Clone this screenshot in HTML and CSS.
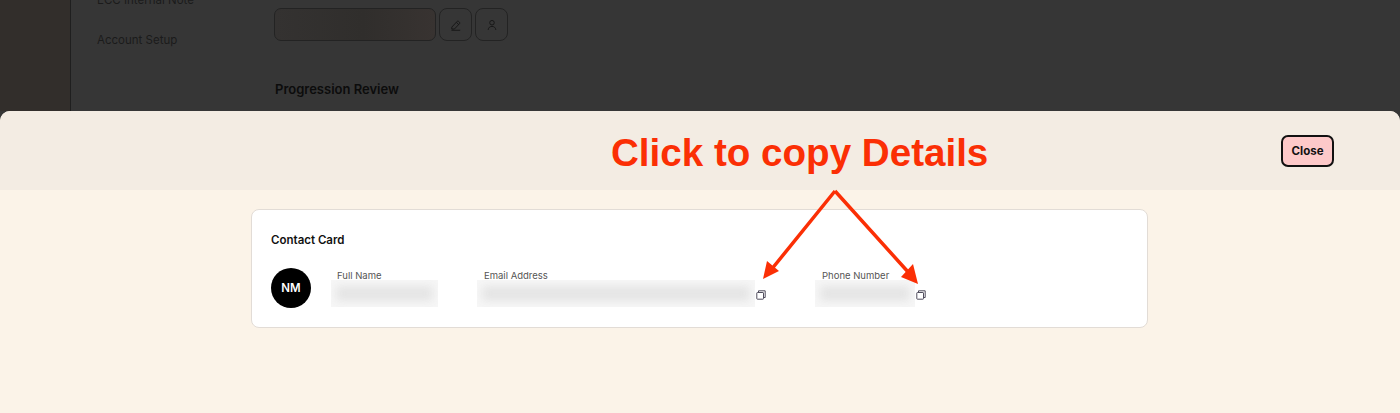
FILE: index.html
```html
<!DOCTYPE html>
<html lang="en">
<head>
<meta charset="utf-8">
<title>Contact Card</title>
<link rel="stylesheet" href="styles.css">
</head>
<body>
<div class="page">
  <aside class="rail"></aside>
  <main class="behind">
    <nav class="side-nav">
      <span class="nav-item nav-clipped">ECC Internal Note</span>
      <span class="nav-item">Account Setup</span>
    </nav>
    <div class="behind-main">
      <div class="toolbar">
        <div class="masked-input"></div>
        <button class="icon-btn" type="button" aria-label="Edit">
          <svg viewBox="0 0 16 16" class="btn-icon"><path d="M3.200 10.400 9.400 3.800a1 1 0 0 1 1.400 0l1.300 1.200a1 1 0 0 1 0 1.400L6.200 12.600H3.200zM8.400 4.900l2.700 2.600M2.800 14h10"/></svg>
        </button>
        <button class="icon-btn" type="button" aria-label="Person">
          <svg viewBox="0 0 16 16" class="btn-icon"><circle cx="8" cy="5.400" r="2.600"/><path d="M3.600 13.600c.3-2.600 2-4 4.400-4s4.100 1.400 4.400 4"/></svg>
        </button>
      </div>
      <h2 class="section-title">Progression Review</h2>
    </div>
  </main>
</div>

<section class="sheet">
  <header class="sheet-head">
    <button class="close-btn" type="button">Close</button>
  </header>
  <div class="sheet-body">
    <article class="card">
      <h3 class="card-title">Contact Card</h3>
      <div class="contact-row">
        <div class="avatar">NM</div>
        <div class="field field-name">
          <span class="field-label">Full Name</span>
          <div class="value-row"><div class="blurred blurred-name"></div></div>
        </div>
        <div class="field field-email">
          <span class="field-label field-label-wide">Email Address</span>
          <div class="value-row">
            <div class="blurred blurred-email"></div>
            <svg class="copy-icon" viewBox="0 0 10 10"><path d="M2.500 2.500V.8h6.700v6.700H7.500"/><rect x=".8" y="2.500" width="6.700" height="6.700" rx=".6"/></svg>
          </div>
        </div>
        <div class="field field-phone">
          <span class="field-label field-label-wide">Phone Number</span>
          <div class="value-row">
            <div class="blurred blurred-phone"></div>
            <svg class="copy-icon" viewBox="0 0 10 10"><path d="M2.500 2.500V.8h6.700v6.700H7.500"/><rect x=".8" y="2.500" width="6.700" height="6.700" rx=".6"/></svg>
          </div>
        </div>
      </div>
    </article>
  </div>
</section>

<div class="callout">Click to copy Details</div>
<svg class="arrows" viewBox="0 0 1400 413" aria-hidden="true">
  <path class="arrow-line" d="M835 191 771 270M835 191 909 273"/>
  <path class="arrow-head" d="M763 279 767 261 779 271zM918 284 901 277 913 264z"/>
</svg>
</body>
</html>
```
FILE: styles.css
```css
* { box-sizing: border-box; }

html, body {
  margin: 0;
  width: 1400px;
  height: 413px;
  overflow: hidden;
}

body {
  position: relative;
  background: #363636;
  font-family: Inter, "Liberation Sans", sans-serif;
}

.page {
  display: flex;
  height: 111px;
  overflow: hidden;
}

.rail {
  width: 71px;
  flex: none;
  background: #322e2b;
  border-right: 1px solid #1f1f1f;
}

.behind {
  display: flex;
  flex: 1;
  padding-left: 26px;
}

.side-nav {
  display: flex;
  flex-direction: column;
  gap: 24px;
  width: 177px;
  margin-top: -8px;
}

.nav-item {
  font-size: 11.500px;
  line-height: 16px;
  color: #1b1b1b;
}

.behind-main {
  display: flex;
  flex-direction: column;
  padding-top: 8px;
}

.toolbar {
  display: flex;
  gap: 3px;
}

.masked-input {
  width: 162px;
  height: 33px;
  border: 1px solid #232323;
  border-radius: 7px;
  background: linear-gradient(90deg, #343231, #302e2c 55%, #383331);
}

.icon-btn {
  display: flex;
  align-items: center;
  justify-content: center;
  width: 33px;
  height: 33px;
  padding: 0;
  border: 1px solid #232323;
  border-radius: 8px;
  background: transparent;
}

.btn-icon {
  width: 14px;
  height: 14px;
  fill: none;
  stroke: #161616;
  stroke-width: 1.100;
}

.section-title {
  margin: 40px 0 0 1px;
  font-size: 13px;
  line-height: 16px;
  font-weight: 600;
  color: #0c0c0c;
}

.sheet {
  position: absolute;
  top: 111px;
  left: 0;
  right: 0;
  bottom: 0;
  display: flex;
  flex-direction: column;
  border-radius: 10px 10px 0 0;
  overflow: hidden;
  background: #fbf3e8;
}

.sheet-head {
  display: flex;
  justify-content: flex-end;
  align-items: flex-start;
  height: 79px;
  padding: 24px 66px 0 0;
  background: #f3ece3;
}

.close-btn {
  width: 53px;
  height: 32px;
  padding: 0;
  border: 2px solid #111;
  border-radius: 7px;
  background: #fdc9c9;
  color: #111;
  font-family: inherit;
  font-size: 11.500px;
  font-weight: 700;
}

.sheet-body {
  padding: 19px 0 0 251px;
}

.card {
  width: 897px;
  height: 119px;
  padding: 23px 19px 0;
  background: #fff;
  border: 1px solid #e2dcd6;
  border-radius: 8px;
}

.card-title {
  margin: 0;
  font-size: 11.500px;
  line-height: 15px;
  font-weight: 600;
  color: #111;
}

.contact-row {
  display: flex;
  align-items: flex-start;
  margin-top: 20px;
}

.avatar {
  display: flex;
  align-items: center;
  justify-content: center;
  flex: none;
  width: 40px;
  height: 40px;
  border-radius: 50%;
  background: #000;
  color: #fff;
  font-size: 11.500px;
  font-weight: 600;
}

.field {
  display: flex;
  flex-direction: column;
  padding-top: 3px;
}

.field-name { margin-left: 20px; width: 146px; }
.field-email { width: 338px; }

.field-label {
  margin-left: 6px;
  margin-bottom: -1px;
  font-size: 9.500px;
  line-height: 10px;
  color: #555;
  white-space: nowrap;
}

.field-label-wide { margin-left: 7px; }

.value-row {
  display: flex;
  align-items: center;
  gap: 1px;
}

.blurred {
  position: relative;
  height: 27px;
  overflow: hidden;
  background: #f7f7f7;
}

.blurred::before {
  content: "";
  position: absolute;
  inset: 6px 5px;
  background: #e4e4e4;
  filter: blur(5px);
}

.blurred-name { width: 107px; }
.blurred-email { width: 278px; }
.blurred-phone { width: 100px; }

.copy-icon {
  flex: none;
  width: 10px;
  height: 10px;
  margin-top: 2px;
  fill: #fff;
  stroke: #4f4c5c;
  stroke-width: 1;
}

.callout {
  position: absolute;
  top: 131px;
  left: 611px;
  font-family: "Liberation Sans", Arial, sans-serif;
  font-size: 38.600px;
  line-height: 44px;
  font-weight: 700;
  color: #fb2f05;
  white-space: nowrap;
}

.arrows {
  position: absolute;
  top: 0;
  left: 0;
  width: 1400px;
  height: 413px;
  pointer-events: none;
}

.arrow-line {
  fill: none;
  stroke: #fb2f05;
  stroke-width: 3.500;
}

.arrow-head { fill: #fb2f05; }
```
